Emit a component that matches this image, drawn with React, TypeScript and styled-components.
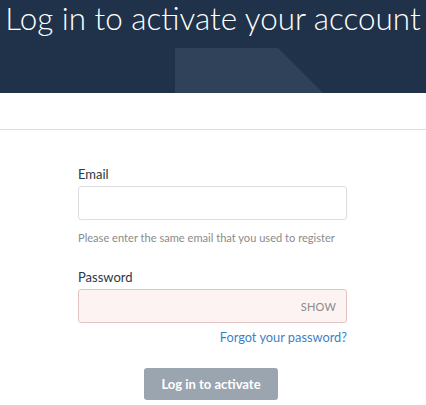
import React from "react";
import styled, {createGlobalStyle} from "styled-components";

const GlobalStyle = createGlobalStyle`
  html, body {
    margin: 0;
    padding: 0;
    background: #fff;
    font-family: Lato, "Open Sans", sans-serif;
  }
`;

const Page = styled.div`
  width: 426px;
  overflow: hidden;
`;

const Hero = styled.header`
  position: relative;
  height: 93px;
  background: #203249;
  overflow: hidden;
`;

const HeroShape = styled.div`
  position: absolute;
  left: 175px;
  top: 48px;
  width: 148px;
  height: 45px;
  background: #2f4259;
  clip-path: polygon(0 0, 103px 0, 148px 100%, 0 100%);
`;

const Title = styled.h1`
  position: relative;
  margin: 0;
  font-family: Lato, sans-serif;
  font-weight: 300;
  font-size: 31.4px;
  line-height: 36px;
  color: #fff;
  text-align: center;
  white-space: nowrap;
`;

const Divider = styled.div`
  height: 36px;
  border-bottom: 1px solid #dcdcdc;
`;

const Form = styled.form`
  width: 269px;
  margin-left: 78px;
  padding-top: 36px;
  display: flex;
  flex-direction: column;
`;

const Label = styled.label`
  font-size: 13px;
  line-height: 16px;
  color: #2a3847;
  margin-bottom: 4px;
`;

const Field = styled.div<{$error?: boolean}>`
  height: 34px;
  box-sizing: border-box;
  border: 1px solid ${(p) => (p.$error ? "#e6c3c3" : "#dedede")};
  background: ${(p) => (p.$error ? "#fdf3f3" : "#fff")};
  border-radius: 3px;
  display: flex;
  align-items: center;
  justify-content: flex-end;
  padding: 0 10px;
`;

const Show = styled.span`
  font-size: 11px;
  color: #8a8a8a;
  letter-spacing: 0.2px;
`;

const Help = styled.p`
  margin: 10px 0 23px;
  font-size: 11.1px;
  line-height: 16px;
  color: #8b8b8b;
`;

const Forgot = styled.a`
  align-self: flex-end;
  margin-top: 6px;
  font-size: 12.8px;
  line-height: 16px;
  color: #3f7fc6;
  text-decoration: none;
`;

const Submit = styled.button`
  align-self: center;
  margin-top: 23px;
  margin-right: 3px;
  width: 134px;
  height: 32px;
  border: none;
  border-radius: 3px;
  background: #9aa5b0;
  color: #fff;
  font-family: Lato, sans-serif;
  font-weight: 700;
  font-size: 13px;
`;

export default function App() {
  return (
    <Page>
      <GlobalStyle />
      <Hero>
        <HeroShape />
        <Title>Log in to activate your account</Title>
      </Hero>
      <Divider />
      <Form>
        <Label>Email</Label>
        <Field />
        <Help>Please enter the same email that you used to register</Help>
        <Label>Password</Label>
        <Field $error>
          <Show>SHOW</Show>
        </Field>
        <Forgot href="#">Forgot your password?</Forgot>
        <Submit type="button">Log in to activate</Submit>
      </Form>
    </Page>
  );
}
